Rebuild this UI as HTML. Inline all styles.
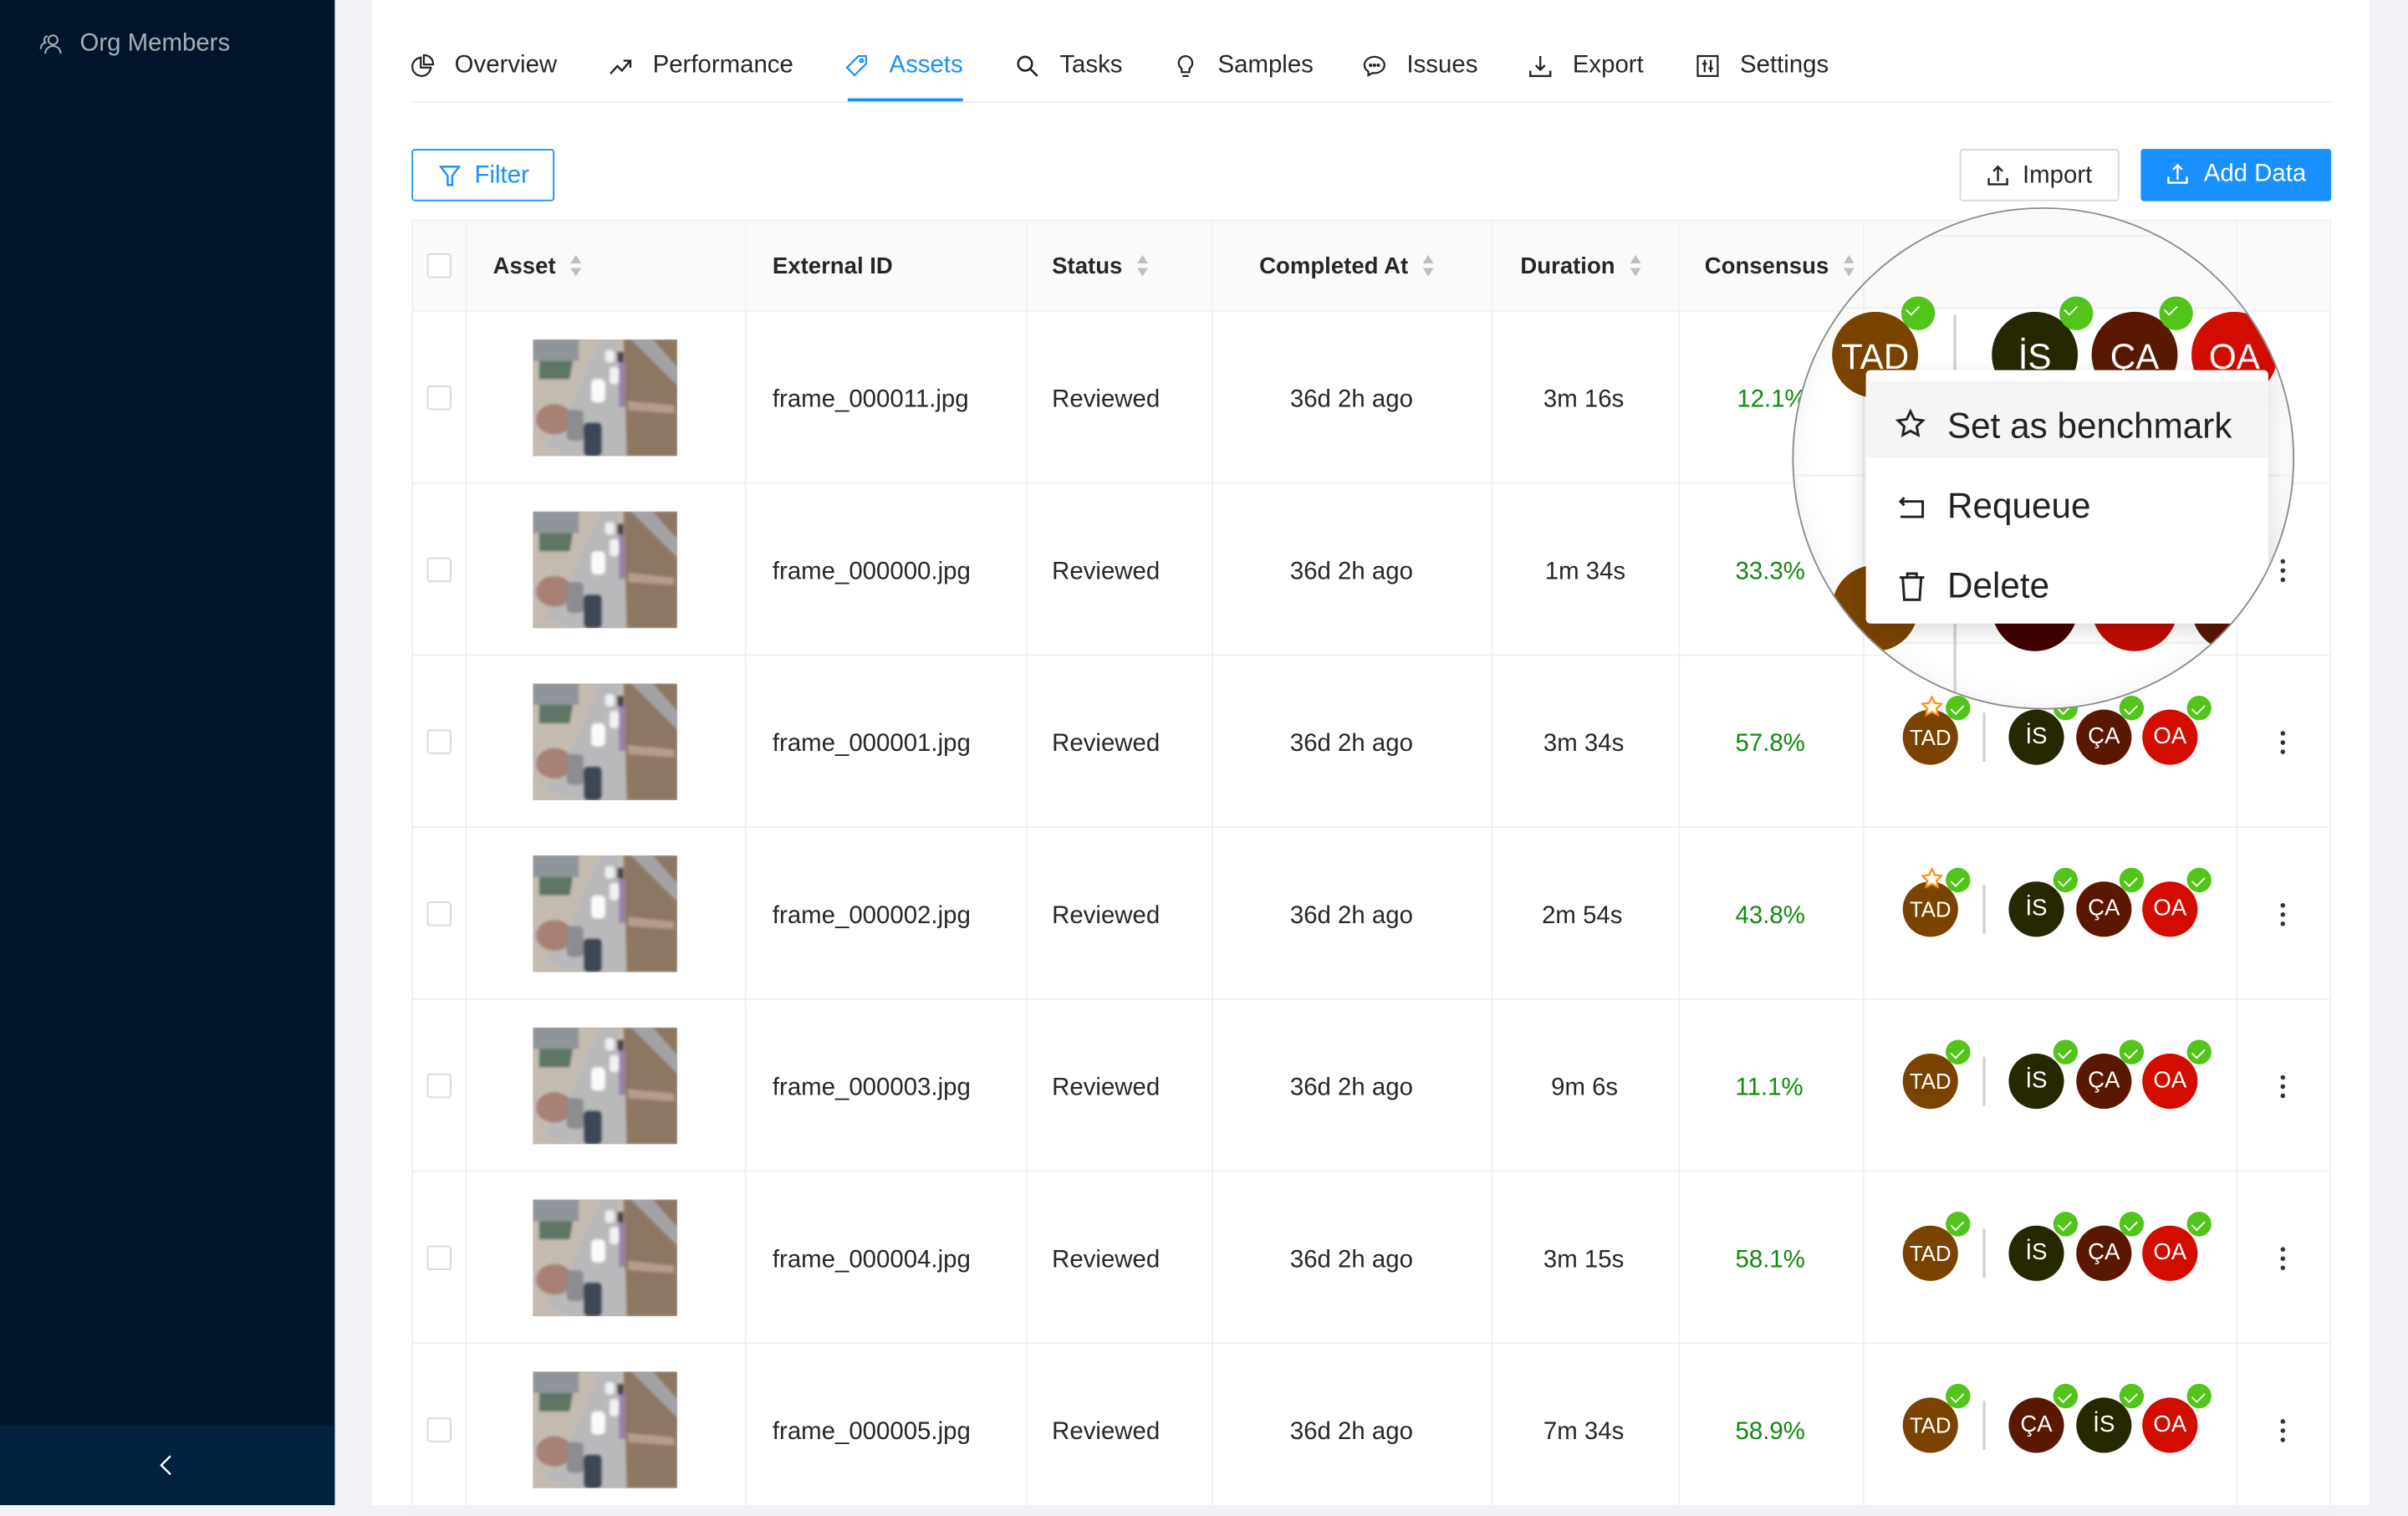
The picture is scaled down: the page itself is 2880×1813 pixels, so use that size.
<!DOCTYPE html>
<html><head><meta charset="utf-8">
<style>
*{box-sizing:border-box;margin:0;padding:0}
html,body{width:2880px;height:1800px;overflow:hidden;background:#f0f2f5}
#s{position:absolute;left:0;top:0;width:1568px;height:980px;transform:scale(1.836735);transform-origin:0 0;font-family:"Liberation Sans","Noto Sans CJK SC",sans-serif;color:rgba(0,0,0,.85);background:#f0f2f5}
.a{position:absolute}
.side{left:0;top:0;width:218px;height:980px;background:#001529}
.coll{left:0;top:928px;width:218px;height:52px;background:#002140}
.main{left:242px;top:0;width:1301px;height:980px;background:#fff}
.tab{position:absolute;top:34px;font-size:16px;line-height:18px;color:rgba(0,0,0,.85);white-space:nowrap}
.tab svg{position:absolute;left:-29px;top:1px}
.btn{position:absolute;top:97px;height:34px;border-radius:2px;font-size:16px;line-height:33px}
.vl{position:absolute;top:143px;width:1px;height:837px;background:#f0f0f0}
.hd{position:absolute;top:165px;font-size:15px;font-weight:bold;line-height:18px;color:rgba(0,0,0,.85)}
.sort{display:inline-block;vertical-align:middle;margin-left:9px;width:8px;height:14px;position:relative;top:-1px}
.row{position:absolute;left:268px;width:1250px;height:112px;border-bottom:1px solid #f0f0f0}
.row .t{position:absolute;top:49px;font-size:16px;line-height:18px;white-space:nowrap}
.cb{position:absolute;left:10px;top:48px;width:16px;height:16px;border:1px solid #d9d9d9;border-radius:2px;background:#fff}
.th{position:absolute;left:79px;top:18px;width:94px;height:76px}
.av{position:absolute;width:36px;height:36px;border-radius:50%;color:#fff;font-size:15px;line-height:36px;text-align:center}
.ck{position:absolute;width:16px;height:16px;border-radius:50%;background:#52c41a}
.ck:after{content:"";position:absolute;left:5px;top:3.5px;width:4px;height:7px;border:solid #fff;border-width:0 1.6px 1.6px 0;transform:rotate(45deg)}
.dv{position:absolute;width:2px;height:32px;background:#d4d4d4}
.dots{position:absolute;left:1217px;top:49px;width:4px}
.dots i{display:block;width:3px;height:3px;border-radius:50%;background:#333;margin-bottom:3px}
.c1{background:#7a4400}.c2{background:#262800}.c3{background:#5a1800}.c4{background:#d30c00}
</style></head><body>
<div id="s">
<div class="a side"></div>
<div class="a coll"></div>
<svg class="a" style="left:25px;top:20px" width="16" height="16" viewBox="0 0 16 16" fill="none" stroke="rgba(255,255,255,.65)" stroke-width="1.1"><circle cx="9.5" cy="6" r="3"/><path d="M4.5 15c0-3 2.2-5 5-5s5 2 5 5"/><path d="M6 3.5a2.5 2.5 0 0 0-1 4.6M1.5 12c0-2 1-3.5 2.5-4"/></svg>
<div class="a" style="left:52px;top:20px;font-size:16px;line-height:18px;color:rgba(255,255,255,.65)">Org Members</div>
<svg class="a" style="left:103px;top:946px" width="10" height="16" viewBox="0 0 10 16" fill="none" stroke="#fff" stroke-width="1.3"><path d="M8 2L2 8l6 6"/></svg>

<div class="a main"></div>
<div class="tab" style="left:296px"><svg width="16" height="16" viewBox="0 0 16 16" fill="none" stroke="#222" stroke-width="1.2"><path d="M7 2.5A6 6 0 1 0 13.5 9H7z"/><path d="M9 1h.5A5.5 5.5 0 0 1 15 6.5V7H9z"/></svg>Overview</div>
<div class="tab" style="left:425px"><svg width="16" height="16" viewBox="0 0 16 16" fill="none" stroke="#222" stroke-width="1.3"><path d="M1.5 13l4.5-5 3 3 5-6M10 4.5h4.5V9"/></svg>Performance</div>
<div class="tab" style="left:579px;color:#1890ff"><svg width="16" height="16" viewBox="0 0 16 16" fill="none" stroke="#1890ff" stroke-width="1.2"><path d="M9 1.5h5v5l-7.5 7.5-5-5z"/><circle cx="11" cy="4.5" r="1"/></svg>Assets</div>
<div class="a" style="left:552px;top:64px;width:75px;height:3px;background:#1890ff"></div>
<div class="tab" style="left:690px"><svg width="16" height="16" viewBox="0 0 16 16" fill="none" stroke="#222" stroke-width="1.4"><circle cx="6.5" cy="6.5" r="4.5"/><path d="M10 10l4.5 4.5"/></svg>Tasks</div>
<div class="tab" style="left:793px"><svg width="16" height="16" viewBox="0 0 16 16" fill="none" stroke="#222" stroke-width="1.2"><path d="M8 1.5a4.5 4.5 0 0 0-2.5 8.2V12h5V9.7A4.5 4.5 0 0 0 8 1.5zM6 14.5h4"/></svg>Samples</div>
<div class="tab" style="left:916px"><svg width="16" height="16" viewBox="0 0 16 16" fill="none" stroke="#222" stroke-width="1.2"><path d="M8 2C4.4 2 1.5 4.4 1.5 7.3c0 1.7 1 3.2 2.5 4.2V14l2.7-1.5c.4.1.9.1 1.3.1 3.6 0 6.5-2.4 6.5-5.3S11.6 2 8 2z"/><circle cx="5.5" cy="7.5" r=".5"/><circle cx="8" cy="7.5" r=".5"/><circle cx="10.5" cy="7.5" r=".5"/></svg>Issues</div>
<div class="tab" style="left:1024px"><svg width="16" height="16" viewBox="0 0 16 16" fill="none" stroke="#222" stroke-width="1.3"><path d="M8 1.5v9M5 7.5l3 3 3-3M1.5 11v3.5h13V11"/></svg>Export</div>
<div class="tab" style="left:1133px"><svg width="16" height="16" viewBox="0 0 16 16" fill="none" stroke="#222" stroke-width="1.2"><rect x="1.5" y="1.5" width="13" height="13"/><path d="M6 4v8M10 4v8M4.5 6.5h3M8.5 9.5h3"/></svg>Settings</div>
<div class="a" style="left:268px;top:66px;width:1250px;height:1px;background:#ececec"></div>

<div class="btn" style="left:268px;width:93px;border:1px solid #1890ff;color:#1890ff;padding-left:40px"><svg class="a" style="left:17px;top:9px" width="14" height="15" viewBox="0 0 14 15" fill="none" stroke="#1890ff" stroke-width="1.3"><path d="M1 1.5h12L8.5 7.5v6h-3v-6z"/></svg>Filter</div>
<div class="btn" style="left:1276px;width:104px;border:1px solid #d9d9d9;color:rgba(0,0,0,.85);padding-left:40px"><svg class="a" style="left:17px;top:9px" width="14" height="14" viewBox="0 0 14 14" fill="none" stroke="#222" stroke-width="1.3"><path d="M7 11V1.5M4 4.5l3-3 3 3M1 9v4h12V9"/></svg>Import</div>
<div class="btn" style="left:1394px;width:124px;background:#1890ff;color:#fff;padding-left:41px"><svg class="a" style="left:17px;top:9px" width="14" height="14" viewBox="0 0 14 14" fill="none" stroke="#fff" stroke-width="1.3"><path d="M7 11V1.5M4 4.5l3-3 3 3M1 9v4h12V9"/></svg>Add Data</div>

<div class="a" style="left:268px;top:143px;width:1250px;height:60px;background:#fafafa;border-top:1px solid #f0f0f0;border-bottom:1px solid #f0f0f0"></div>
<div class="vl" style="left:268px"></div><div class="vl" style="left:303px"></div><div class="vl" style="left:485px"></div><div class="vl" style="left:668px"></div><div class="vl" style="left:789px"></div><div class="vl" style="left:971px"></div><div class="vl" style="left:1093px"></div><div class="vl" style="left:1213px"></div><div class="vl" style="left:1456px"></div><div class="vl" style="left:1517px"></div>
<div class="cb" style="left:278px;top:165px"></div>
<svg width="0" height="0" style="position:absolute"><defs><g id="srt"><path d="M4 0L7.5 5.5H.5z" fill="#bfbfbf"/><path d="M4 14L7.5 8.5H.5z" fill="#bfbfbf"/></g></defs></svg>
<div class="hd" style="left:321px">Asset<svg class="sort" viewBox="0 0 8 14"><use href="#srt"/></svg></div>
<div class="hd" style="left:503px">External ID</div>
<div class="hd" style="left:685px">Status<svg class="sort" viewBox="0 0 8 14"><use href="#srt"/></svg></div>
<div class="hd" style="left:820px">Completed At<svg class="sort" viewBox="0 0 8 14"><use href="#srt"/></svg></div>
<div class="hd" style="left:990px">Duration<svg class="sort" viewBox="0 0 8 14"><use href="#srt"/></svg></div>
<div class="hd" style="left:1110px">Consensus<svg class="sort" viewBox="0 0 8 14"><use href="#srt"/></svg></div>

<svg width="0" height="0" style="position:absolute"><defs>
<filter id="bl"><feGaussianBlur stdDeviation="0.8"/></filter>
<g id="img">
<rect width="94" height="76" fill="#c2b8ac"/>
<g filter="url(#bl)">
<path d="M0 0h94v76H0z" fill="#c4bbb0"/>
<path d="M0 0h30v14H0z" fill="#8f949a"/>
<path d="M4 14h22l-2 12H4z" fill="#5f7466"/>
<path d="M44 0h12l6 76H30L8 70l18-30z" fill="#b9b9bb"/>
<path d="M59 0h35v76H61z" fill="#8c7762"/>
<path d="M64 0h14l16 18v12z" fill="#a3a3a5"/>
<path d="M62 40l30 3v5l-30-2z" fill="#b59c8c"/>
<rect x="56" y="14" width="4" height="30" fill="#9a82a8"/>
<ellipse cx="14" cy="52" rx="12" ry="10" fill="#a88074"/>
<rect x="47" y="7" width="6" height="8" rx="2" fill="#eee"/><rect x="50" y="18" width="6" height="11" rx="2" fill="#f2f2f2"/>
<rect x="38" y="26" width="9" height="15" rx="3" fill="#fafafa"/><rect x="55" y="8" width="4" height="7" fill="#444"/>
<rect x="22" y="46" width="11" height="20" rx="3" fill="#8c8c90"/><rect x="33" y="54" width="12" height="22" rx="3" fill="#3e4656"/>
</g>
</g>
<g id="star"><path d="M7 .8l1.9 3.9 4.3.6-3.1 3 .7 4.3L7 10.6 3.2 12.6l.7-4.3-3.1-3 4.3-.6z" fill="#fffbe6" stroke="#fa8c16" stroke-width="1.2"/></g>
</defs></svg>

<div class="row" style="top:203px"><div class="cb"></div><svg class="th"><use href="#img"/></svg><div class="t" style="left:235px">frame_000011.jpg</div><div class="t" style="left:417px">Reviewed</div><div class="t" style="left:572px">36d 2h ago</div><div class="t" style="left:737px">3m 16s</div><div class="t" style="left:863px;color:#0f8a0f">12.1%</div></div>
<div class="row" style="top:315px"><div class="cb"></div><svg class="th"><use href="#img"/></svg><div class="t" style="left:235px">frame_000000.jpg</div><div class="t" style="left:417px">Reviewed</div><div class="t" style="left:572px">36d 2h ago</div><div class="t" style="left:738px">1m 34s</div><div class="t" style="left:862px;color:#0f8a0f">33.3%</div><div class="dots"><i></i><i></i><i></i></div></div>

<div class="row" style="top:427px"><div class="cb"></div><svg class="th"><use href="#img"/></svg><div class="t" style="left:235px">frame_000001.jpg</div><div class="t" style="left:417px">Reviewed</div><div class="t" style="left:572px">36d 2h ago</div><div class="t" style="left:737px">3m 34s</div><div class="t" style="left:862px;color:#0f8a0f">57.8%</div>
<div class="av c1" style="left:971px;top:35px;font-size:14px">TAD</div><svg class="a" style="left:983px;top:26px" width="14" height="14"><use href="#star"/></svg><div class="ck" style="left:999px;top:26px"></div><div class="dv" style="left:1023px;top:37px"></div>
<div class="av c2" style="left:1040px;top:35px">İS</div><div class="ck" style="left:1069px;top:26px"></div><div class="av c3" style="left:1084px;top:35px">ÇA</div><div class="ck" style="left:1112px;top:26px"></div><div class="av c4" style="left:1127px;top:35px">OA</div><div class="ck" style="left:1156px;top:26px"></div><div class="dots"><i></i><i></i><i></i></div></div>

<div class="row" style="top:539px"><div class="cb"></div><svg class="th"><use href="#img"/></svg><div class="t" style="left:235px">frame_000002.jpg</div><div class="t" style="left:417px">Reviewed</div><div class="t" style="left:572px">36d 2h ago</div><div class="t" style="left:736px">2m 54s</div><div class="t" style="left:862px;color:#0f8a0f">43.8%</div>
<div class="av c1" style="left:971px;top:35px;font-size:14px">TAD</div><svg class="a" style="left:983px;top:26px" width="14" height="14"><use href="#star"/></svg><div class="ck" style="left:999px;top:26px"></div><div class="dv" style="left:1023px;top:37px"></div>
<div class="av c2" style="left:1040px;top:35px">İS</div><div class="ck" style="left:1069px;top:26px"></div><div class="av c3" style="left:1084px;top:35px">ÇA</div><div class="ck" style="left:1112px;top:26px"></div><div class="av c4" style="left:1127px;top:35px">OA</div><div class="ck" style="left:1156px;top:26px"></div><div class="dots"><i></i><i></i><i></i></div></div>

<div class="row" style="top:651px"><div class="cb"></div><svg class="th"><use href="#img"/></svg><div class="t" style="left:235px">frame_000003.jpg</div><div class="t" style="left:417px">Reviewed</div><div class="t" style="left:572px">36d 2h ago</div><div class="t" style="left:742px">9m 6s</div><div class="t" style="left:862px;color:#0f8a0f">11.1%</div>
<div class="av c1" style="left:971px;top:35px;font-size:14px">TAD</div><div class="ck" style="left:999px;top:26px"></div><div class="dv" style="left:1023px;top:37px"></div>
<div class="av c2" style="left:1040px;top:35px">İS</div><div class="ck" style="left:1069px;top:26px"></div><div class="av c3" style="left:1084px;top:35px">ÇA</div><div class="ck" style="left:1112px;top:26px"></div><div class="av c4" style="left:1127px;top:35px">OA</div><div class="ck" style="left:1156px;top:26px"></div><div class="dots"><i></i><i></i><i></i></div></div>

<div class="row" style="top:763px"><div class="cb"></div><svg class="th"><use href="#img"/></svg><div class="t" style="left:235px">frame_000004.jpg</div><div class="t" style="left:417px">Reviewed</div><div class="t" style="left:572px">36d 2h ago</div><div class="t" style="left:737px">3m 15s</div><div class="t" style="left:862px;color:#0f8a0f">58.1%</div>
<div class="av c1" style="left:971px;top:35px;font-size:14px">TAD</div><div class="ck" style="left:999px;top:26px"></div><div class="dv" style="left:1023px;top:37px"></div>
<div class="av c2" style="left:1040px;top:35px">İS</div><div class="ck" style="left:1069px;top:26px"></div><div class="av c3" style="left:1084px;top:35px">ÇA</div><div class="ck" style="left:1112px;top:26px"></div><div class="av c4" style="left:1127px;top:35px">OA</div><div class="ck" style="left:1156px;top:26px"></div><div class="dots"><i></i><i></i><i></i></div></div>

<div class="row" style="top:875px"><div class="cb"></div><svg class="th"><use href="#img"/></svg><div class="t" style="left:235px">frame_000005.jpg</div><div class="t" style="left:417px">Reviewed</div><div class="t" style="left:572px">36d 2h ago</div><div class="t" style="left:737px">7m 34s</div><div class="t" style="left:862px;color:#0f8a0f">58.9%</div>
<div class="av c1" style="left:971px;top:35px;font-size:14px">TAD</div><div class="ck" style="left:999px;top:26px"></div><div class="dv" style="left:1023px;top:37px"></div>
<div class="av c3" style="left:1040px;top:35px">ÇA</div><div class="ck" style="left:1069px;top:26px"></div><div class="av c2" style="left:1084px;top:35px">İS</div><div class="ck" style="left:1112px;top:26px"></div><div class="av c4" style="left:1127px;top:35px">OA</div><div class="ck" style="left:1156px;top:26px"></div><div class="dots"><i></i><i></i><i></i></div></div>

<div class="a" style="left:1167px;top:135px;width:327px;height:327px;border-radius:50%;overflow:hidden;background:#fff;border:1.5px solid #8a8a8a;box-shadow:inset 0 0 20px rgba(0,0,0,.06)">
 <div class="a" style="left:0;top:0;width:330px;height:65px;background:#fafafa;border-bottom:1px solid #eee"></div>
 <div class="a" style="left:0;top:17px;width:330px;height:1px;background:#eee"></div>
 <div class="a" style="left:45px;top:0;width:1px;height:330px;background:#eee"></div>
 <div class="a" style="left:289px;top:0;width:1px;height:330px;background:#eee"></div>
 <div class="a" style="left:0;top:173px;width:330px;height:1px;background:#eee"></div>
 <div class="a" style="left:0;top:282px;width:330px;height:1px;background:#eee"></div>
 <div class="a" style="left:-30px;top:28px;font-size:22px;font-weight:bold">sus</div>
 <div class="av c1" style="left:25px;top:67px;width:56px;height:56px;line-height:58px;font-size:23px">TAD</div>
 <div class="ck" style="left:70px;top:57px;width:22px;height:22px"></div>
 <div class="a" style="left:104px;top:69px;width:2px;height:300px;background:#d4d4d4"></div>
 <div class="av c2" style="left:129px;top:67px;width:56px;height:56px;line-height:58px;font-size:23px">İS</div>
 <div class="ck" style="left:173px;top:57px;width:22px;height:22px"></div>
 <div class="av c3" style="left:194px;top:67px;width:56px;height:56px;line-height:58px;font-size:23px">ÇA</div>
 <div class="ck" style="left:238px;top:57px;width:22px;height:22px"></div>
 <div class="av c4" style="left:259px;top:67px;width:56px;height:56px;line-height:58px;font-size:23px">OA</div>
 <div class="av c1" style="left:25px;top:232px;width:56px;height:56px"></div>
 <div class="av" style="left:129px;top:232px;width:56px;height:56px;background:#400000"></div>
 <div class="av" style="left:194px;top:232px;width:56px;height:56px;background:#bf0c00"></div>
 <div class="av c3" style="left:259px;top:232px;width:56px;height:56px"></div>
 <div class="a" style="left:47px;top:105px;width:262px;height:165px;background:#fff;border-radius:3px;box-shadow:0 4px 14px rgba(0,0,0,.15)">
  <div class="a" style="left:0;top:7px;width:262px;height:50px;background:#f5f5f5"></div>
  <svg class="a" style="left:19px;top:25px" width="20" height="20" viewBox="0 0 20 20" fill="none" stroke="#222" stroke-width="1.6"><path d="M10 1.8l2.5 5.2 5.6.8-4 3.9 1 5.6-5.1-2.7-5 2.7 1-5.6-4.1-3.9 5.7-.8z"/></svg>
  <div class="a" style="left:53px;top:22px;font-size:23px;line-height:28px;color:#222">Set as benchmark</div>
  <svg class="a" style="left:21px;top:80px" width="18" height="18" viewBox="0 0 18 18" fill="none" stroke="#222" stroke-width="1.6"><path d="M4 3L1.5 5.5 4 8M1.5 5.5h14.5v10H1.5"/></svg>
  <div class="a" style="left:53px;top:74px;font-size:23px;line-height:28px;color:#222">Requeue</div>
  <svg class="a" style="left:21px;top:131px" width="18" height="20" viewBox="0 0 18 20" fill="none" stroke="#222" stroke-width="1.6"><path d="M1 4h16M6 4V1.5h6V4M3 4l1 14.5h10L15 4"/></svg>
  <div class="a" style="left:53px;top:126px;font-size:23px;line-height:28px;color:#222">Delete</div>
 </div>
</div>
</div>
</body></html>
